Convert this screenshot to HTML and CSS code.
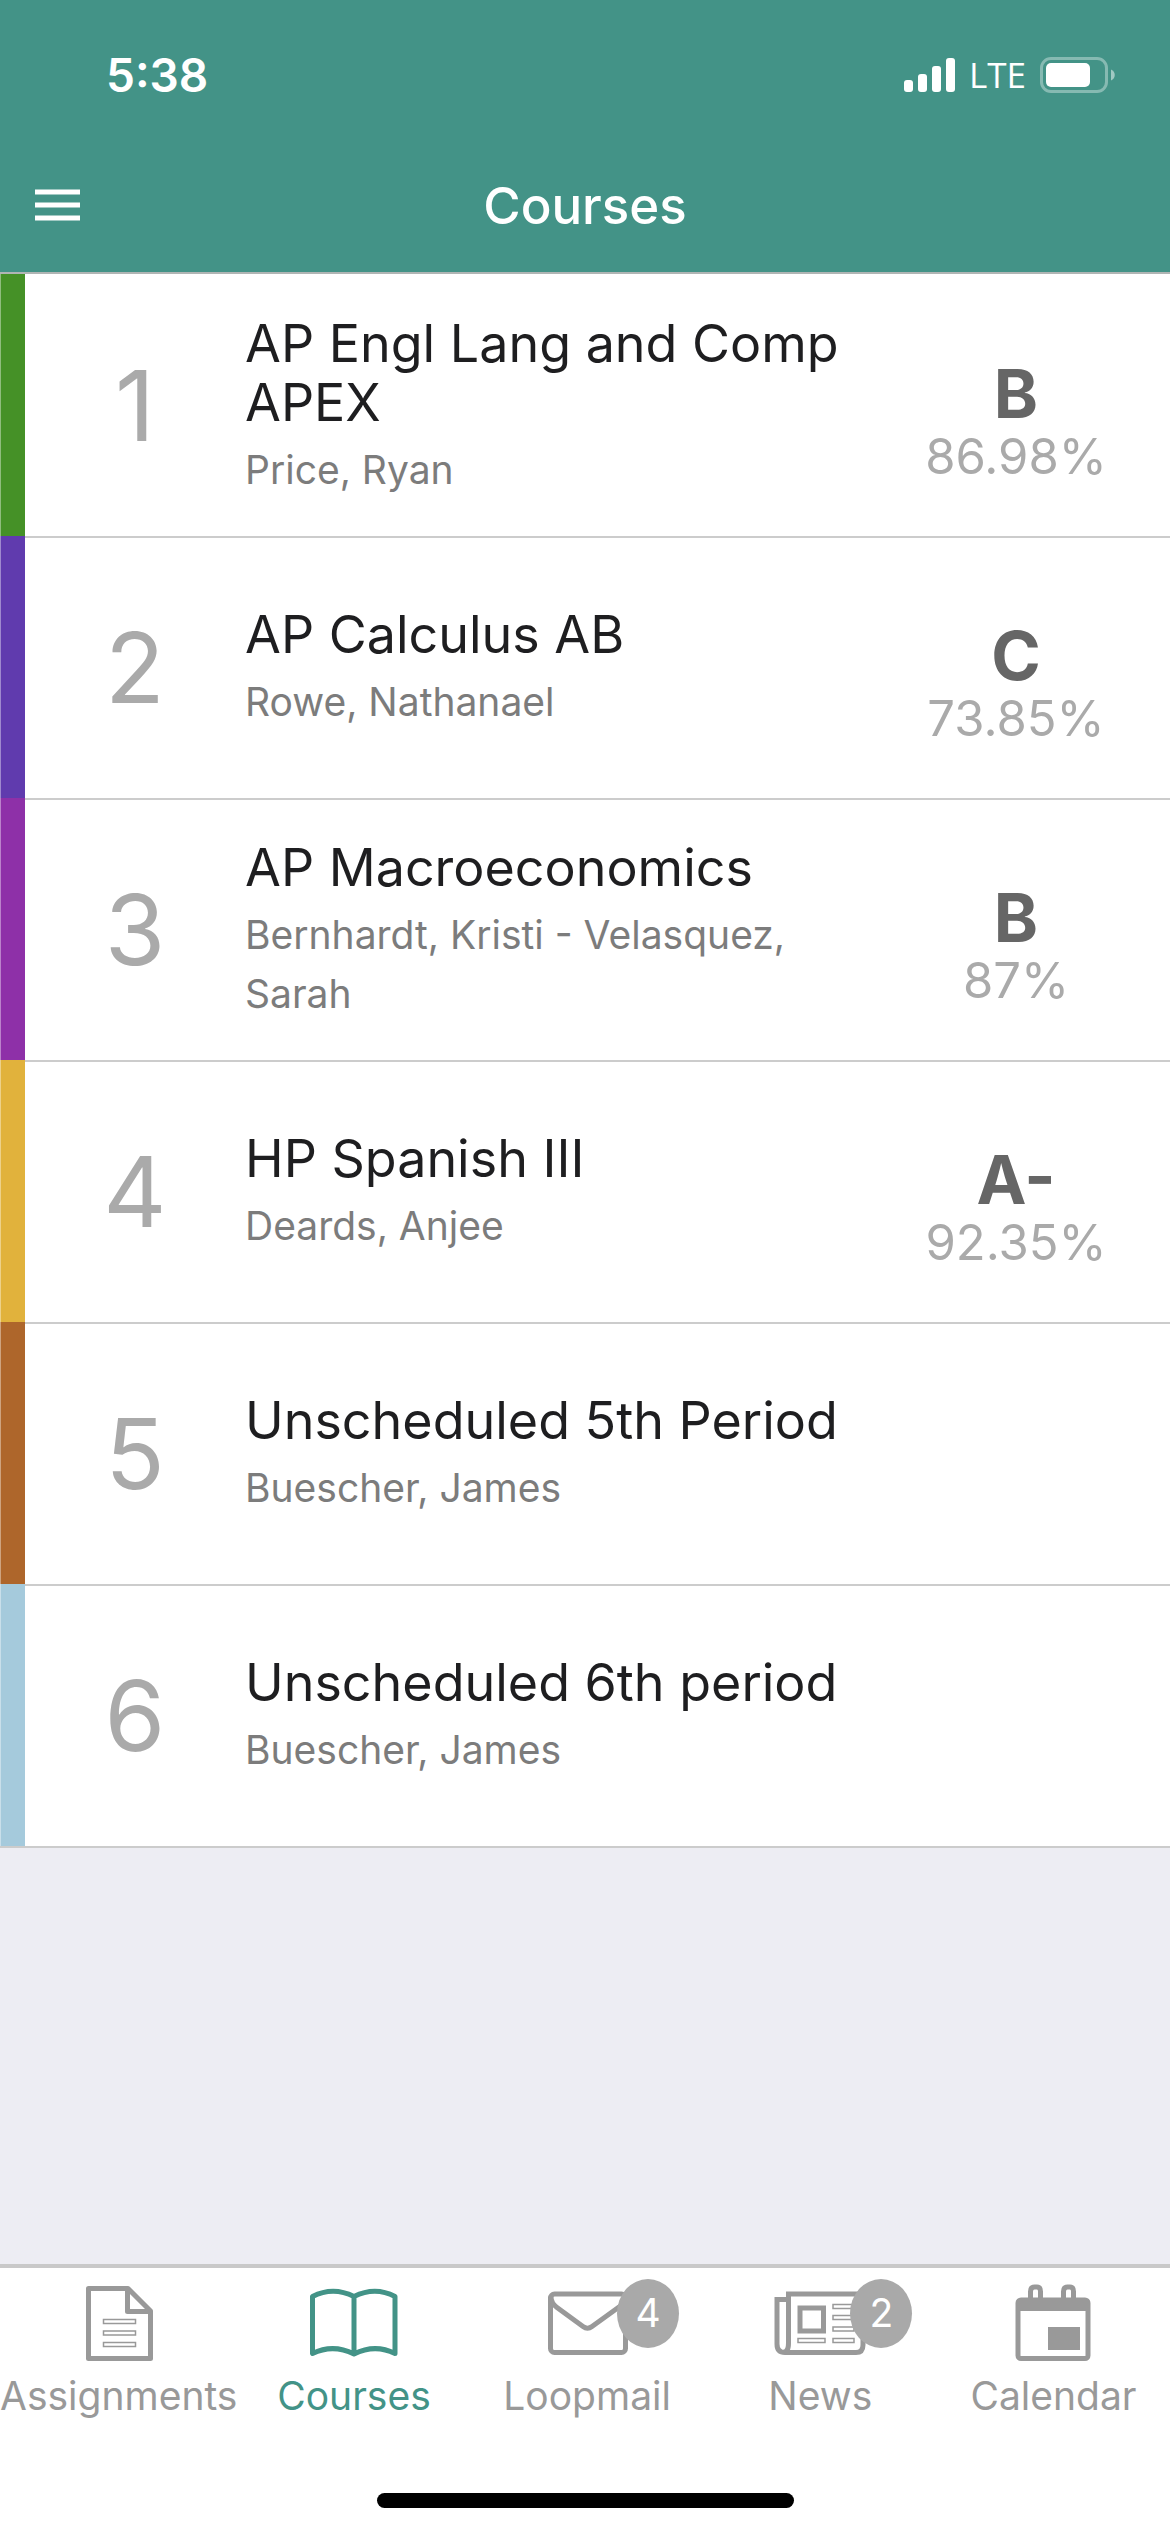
FILE: index.html
```html
<!DOCTYPE html>
<html lang="en">
<head>
<meta charset="utf-8">
<meta name="viewport" content="width=device-width, initial-scale=1">
<title>Courses</title>
<link rel="stylesheet" href="styles.css">
</head>
<body>
<div class="app">
  <header class="header">
    <div class="status">
      <span class="clock">5:38</span>
      <div class="indicators">
        <svg class="signal" viewBox="0 0 51 34" aria-hidden="true">
          <rect x="0" y="22" width="9" height="12" rx="3"/>
          <rect x="14" y="16" width="9" height="18" rx="3"/>
          <rect x="28" y="8" width="9" height="26" rx="3"/>
          <rect x="42" y="0" width="9" height="34" rx="3"/>
        </svg>
        <span class="network">LTE</span>
        <svg class="battery" viewBox="0 0 75 36" aria-hidden="true">
          <rect x="1.5" y="1.5" width="65" height="33" rx="9.500" fill="none" stroke="#fff" stroke-opacity=".36" stroke-width="3"/>
          <rect x="6" y="6" width="44" height="24" rx="5"/>
          <path d="M71 12.500c5 2 5 9 0 11z" fill-opacity=".5"/>
        </svg>
      </div>
    </div>
    <div class="navbar">
      <button class="menu" type="button" aria-label="Menu">
        <svg viewBox="0 0 45 32" aria-hidden="true"><path d="M0 3h45M0 16h45M0 29h45"/></svg>
      </button>
      <h1 class="title">Courses</h1>
    </div>
  </header>

  <main class="main">
    <ul class="courses">
      <li class="course">
        <span class="stripe green"></span>
        <span class="period">1</span>
        <div class="info"><h2 class="name">AP Engl Lang and Comp APEX</h2><p class="teacher">Price, Ryan</p></div>
        <div class="score"><strong class="grade">B</strong><span class="percent">86.98%</span></div>
      </li>
      <li class="course">
        <span class="stripe indigo"></span>
        <span class="period">2</span>
        <div class="info"><h2 class="name">AP Calculus AB</h2><p class="teacher">Rowe, Nathanael</p></div>
        <div class="score"><strong class="grade">C</strong><span class="percent">73.85%</span></div>
      </li>
      <li class="course">
        <span class="stripe purple"></span>
        <span class="period">3</span>
        <div class="info"><h2 class="name">AP Macroeconomics</h2><p class="teacher">Bernhardt, Kristi - Velasquez, Sarah</p></div>
        <div class="score"><strong class="grade">B</strong><span class="percent">87%</span></div>
      </li>
      <li class="course">
        <span class="stripe yellow"></span>
        <span class="period">4</span>
        <div class="info"><h2 class="name">HP Spanish III</h2><p class="teacher">Deards, Anjee</p></div>
        <div class="score"><strong class="grade">A-</strong><span class="percent">92.35%</span></div>
      </li>
      <li class="course">
        <span class="stripe brown"></span>
        <span class="period">5</span>
        <div class="info"><h2 class="name">Unscheduled 5th Period</h2><p class="teacher">Buescher, James</p></div>
      </li>
      <li class="course">
        <span class="stripe blue"></span>
        <span class="period">6</span>
        <div class="info"><h2 class="name">Unscheduled 6th period</h2><p class="teacher">Buescher, James</p></div>
      </li>
    </ul>
  </main>

  <footer class="footer">
    <nav class="tabs">
      <a class="tab" href="#assignments">
        <span class="icon">
          <svg viewBox="0 0 96 80" aria-hidden="true">
            <g fill="none" stroke="currentColor" stroke-width="5" stroke-linejoin="round">
              <path d="M17.500 5.500H57L79.500 28V75.500H17.500z"/>
              <path d="M56.500 6V28.500H79"/>
            </g>
            <g fill="none" stroke="currentColor" stroke-width="1.500">
              <rect x="32.500" y="36.500" width="32" height="4"/>
              <rect x="32.500" y="48" width="32" height="4"/>
              <rect x="32.500" y="59.500" width="32" height="4"/>
            </g>
          </svg>
        </span>
        <span class="label">Assignments</span>
      </a>
      <a class="tab active" href="#courses" aria-current="page">
        <span class="icon">
          <svg viewBox="0 0 96 80" aria-hidden="true">
            <path fill="none" stroke="currentColor" stroke-width="5" stroke-linejoin="round" d="M6.500 13.500Q27 3 48 13.500Q69 3 89 13.500V70.500Q69 60.500 48 71Q27 60.500 6.500 70.500zM48 13.500V71"/>
          </svg>
        </span>
        <span class="label">Courses</span>
      </a>
      <a class="tab" href="#loopmail">
        <span class="icon">
          <svg viewBox="0 0 96 80" aria-hidden="true">
            <g fill="none" stroke="currentColor" stroke-width="5" stroke-linejoin="round">
              <rect x="11.500" y="11" width="75" height="58.500" rx="4"/>
              <path d="M12 14Q12 20 18 24.500L44 43.500Q48.500 47 53 43.500L80 24Q86 20 86 14"/>
            </g>
          </svg>
          <span class="badge">4</span>
        </span>
        <span class="label">Loopmail</span>
      </a>
      <a class="tab" href="#news">
        <span class="icon">
          <svg viewBox="0 0 96 80" aria-hidden="true">
            <g fill="none" stroke="currentColor" stroke-width="5">
              <path d="M16 16.500H5V61Q5 69.500 13 69.500H84Q91 69.500 91 62V11H16.500V60Q16.500 69.500 11 69.500"/>
              <rect x="28" y="25" width="23.500" height="23"/>
            </g>
            <g fill="none" stroke="currentColor" stroke-width="1.500">
              <rect x="26" y="55.500" width="27" height="4"/>
              <rect x="61" y="21.500" width="21" height="4"/>
              <rect x="61" y="32.500" width="21" height="4"/>
              <rect x="61" y="44" width="21" height="4"/>
              <rect x="61" y="55.500" width="21" height="4"/>
            </g>
          </svg>
          <span class="badge">2</span>
        </span>
        <span class="label">News</span>
      </a>
      <a class="tab" href="#calendar">
        <span class="icon">
          <svg viewBox="0 0 96 80" aria-hidden="true">
            <g fill="none" stroke="currentColor" stroke-width="5">
              <path d="M25.500 16V8.500Q25.500 4 29.500 4H32Q35.500 4 35.500 8.500V16M58.500 16V8.500Q58.500 4 62.500 4H65Q68.500 4 68.500 8.500V16"/>
              <rect x="13" y="17" width="70" height="58.500" rx="3"/>
            </g>
            <path fill="currentColor" d="M13 16H83V28H13zM43 44H75V67H43z"/>
          </svg>
        </span>
        <span class="label">Calendar</span>
      </a>
    </nav>
    <div class="home"></div>
  </footer>
</div>
</body>
</html>
```
FILE: styles.css
```css
* {
  box-sizing: border-box;
}

body {
  margin: 0;
  background: #ededf3;
  font-family: Inter, "Liberation Sans", sans-serif;
}

.app {
  display: flex;
  flex-direction: column;
  min-height: 100vh;
}

/* Header */
.header {
  background: #439387;
  color: #fff;
  border-bottom: 2px solid #b0b5b4;
}

.status {
  display: flex;
  align-items: center;
  justify-content: space-between;
  height: 138px;
  padding: 12px 55px 0 106px;
}

.clock {
  font-size: 46px;
  font-weight: 600;
}

.indicators {
  display: flex;
  align-items: center;
  gap: 14px;
}

.signal {
  width: 51px;
  height: 34px;
  fill: #fff;
}

.network {
  font-family: "Open Sans", "Noto Sans", sans-serif;
  font-size: 35px;
  line-height: 40px;
  font-weight: 500;
}

.battery {
  width: 75px;
  height: 36px;
  fill: #fff;
}

.navbar {
  display: grid;
  grid-template-columns: 80px 1fr 80px;
  align-items: center;
  height: 134px;
}

.menu {
  display: flex;
  justify-content: flex-end;
  padding: 0;
  border: 0;
  background: none;
}

.menu svg {
  width: 45px;
  height: 32px;
  stroke: #fff;
  stroke-width: 5px;
}

.title {
  margin: 0;
  font-size: 51px;
  font-weight: 500;
  text-align: center;
}

/* Course list */
.main {
  flex: 1;
}

.courses {
  margin: 0;
  padding: 2px 0 0;
  list-style: none;
  background: #fff;
}

.course {
  display: grid;
  grid-template-columns: 25px 220px 1fr 308px;
  align-items: center;
  min-height: 262px;
  border-bottom: 2px solid #ccc;
}

/* The stripe covers the divider above it */
.stripe {
  align-self: stretch;
  margin-top: -2px;
  border-left: 1px solid #ffffff66;
}

.green { background-color: #459127; }
.indigo { background-color: #603bae; }
.purple { background-color: #8e30a8; }
.yellow { background-color: #e1b23c; }
.brown { background-color: #ae662b; }
.blue { background-color: #a5cadc; }

.period {
  font-size: 98px;
  line-height: 100px;
  text-align: center;
  color: #aaa;
}

.info {
  display: grid;
  gap: 8px;
}

.name {
  margin: 0;
  font-size: 52px;
  line-height: 59px;
  font-weight: 400;
  color: #1e1e20;
}

.teacher {
  margin: 0;
  font-size: 39px;
  line-height: 59px;
  color: #7c7c7c;
}

.score {
  display: grid;
  padding-top: 36px;
  text-align: center;
}

.grade {
  font-size: 67px;
  line-height: 66px;
  font-weight: 700;
  color: #666;
}

.percent {
  font-size: 49px;
  line-height: 60px;
  color: #aaa;
}

/* Tab bar */
.footer {
  padding-bottom: 24px;
  border-top: 4px solid #c9c9c9;
  background: #fff;
}

.tabs {
  display: flex;
  padding-top: 15px;
}

.tab {
  display: flex;
  flex: 1;
  flex-direction: column;
  align-items: center;
  gap: 11px;
  color: #999;
  font-size: 39px;
  line-height: 44px;
  text-decoration: none;
}

.active {
  color: #439387;
}

.icon {
  position: relative;
}

.icon svg {
  display: block;
  width: 96px;
  height: 80px;
}

.badge {
  position: absolute;
  top: -4px;
  left: 78px;
  width: 62px;
  height: 69px;
  border-radius: 50%;
  background: #a9a9a9;
  color: #fff;
  line-height: 68px;
  text-align: center;
}

.home {
  width: 417px;
  height: 15px;
  margin: 75px auto 0;
  border-radius: 8px;
  background: #000;
}
```
